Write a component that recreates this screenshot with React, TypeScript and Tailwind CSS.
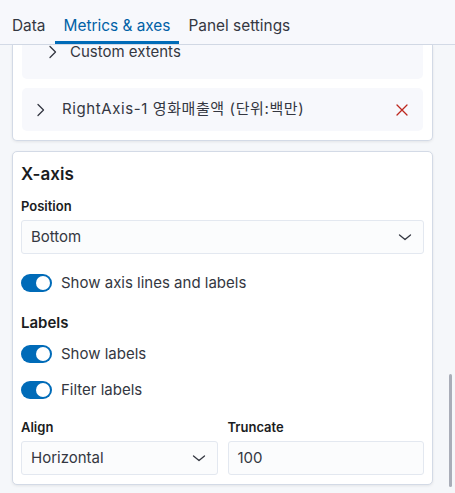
import React from 'react';

function Chevron({ dir = 'right', className = '' }: { dir?: 'right' | 'down'; className?: string }) {
    return (
        <svg width="16" height="16" viewBox="0 0 16 16" className={className} fill="none" stroke="currentColor" strokeWidth="1.3" strokeLinecap="round" strokeLinejoin="round">
            {dir === 'right' ? <path d="M5 2.5 L10.5 8 L5 13.5" /> : <path d="M2.5 6 L8 10.5 L13.5 6" />}
        </svg>
    );
}

function Toggle({ label }: { label: string }) {
    return (
        <div className="flex items-center gap-[9px] h-[18px]">
            <div className="w-[31px] h-[18px] rounded-full bg-[#006bb8] flex items-center justify-end pr-[2px]">
                <div className="w-[14px] h-[14px] rounded-full bg-white" />
            </div>
            <span className="text-[15px] text-[#343741]">{label}</span>
        </div>
    );
}

function Select({ value }: { value: string }) {
    return (
        <div className="h-[34px] flex items-center justify-between pl-[9px] pr-[10px] bg-[#fbfcfd] border border-[#e3e8f0] rounded-[3px] text-[15px] text-[#343741]">
            <span>{value}</span>
            <Chevron dir="down" className="text-[#343741]" />
        </div>
    );
}

export default function App() {
    return (
        <div className="w-[455px] h-[493px] bg-[#f5f7fa] relative overflow-hidden text-[#343741]" style={{ fontFamily: 'Inter, "Noto Sans CJK KR", sans-serif' }}>
            <div className="h-[45px] flex items-end px-[3px] border-b border-[#d3dae6] bg-[#f7f8fc]">
                <div className="h-[44px] px-[9px] flex items-center text-[15.4px] text-[#343741] border-b-[3px] border-transparent pt-[10px]">Data</div>
                <div className="h-[44px] px-[9px] flex items-center text-[15.4px] text-[#0061a6] border-b-[3px] border-[#006bb8] pt-[10px]">Metrics &amp; axes</div>
                <div className="h-[44px] px-[9px] flex items-center text-[15.4px] text-[#343741] border-b-[3px] border-transparent pt-[10px]">Panel settings</div>
            </div>

            <div className="pl-[12px] w-[433px]">
                <div className="bg-white border-x border-b border-[#d3dae6] rounded-b-[5px] shadow-[0_1px_3px_rgba(0,0,0,0.08)] px-[9px] pb-[9px]">
                    <div className="h-[34px] bg-[#f7f8fc] rounded-b-[5px] flex items-start pl-[23px] gap-[9px] text-[15px] text-[#343741]">
                        <Chevron className="mt-[-1px]" />
                        <span className="leading-[14px]">Custom extents</span>
                    </div>
                    <div className="mt-[9px] h-[43px] bg-[#f7f8fc] rounded-[5px] flex items-center pl-[11px] pr-[14px] text-[15px] text-[#343741]">
                        <Chevron />
                        <span className="ml-[13px] flex-1 tracking-[0.6px]">RightAxis-1 영화매출액 (단위:백만)</span>
                        <svg width="14" height="14" viewBox="0 0 14 14" stroke="#bd271e" strokeWidth="1.3" strokeLinecap="round">
                            <path d="M2 2 L12 12 M12 2 L2 12" />
                        </svg>
                    </div>
                </div>

                <div className="mt-[10px] bg-white border border-[#d3dae6] rounded-[5px] shadow-[0_1px_3px_rgba(0,0,0,0.08)] px-[8px] pt-[9px] pb-[9px]">
                    <div className="text-[17px] font-semibold text-[#1a1c21] h-[26px] leading-[26px]">X-axis</div>
                    <div className="mt-[12px] text-[13px] font-semibold text-[#1a1c21] h-[14px] leading-[14px]">Position</div>
                    <div className="mt-[7px]"><Select value="Bottom" /></div>
                    <div className="mt-[20px]"><Toggle label="Show axis lines and labels" /></div>
                    <div className="mt-[22px] text-[15px] font-semibold text-[#1a1c21] h-[18px] leading-[18px]">Labels</div>
                    <div className="mt-[13px]"><Toggle label="Show labels" /></div>
                    <div className="mt-[18px]"><Toggle label="Filter labels" /></div>
                    <div className="mt-[21px] grid grid-cols-2 gap-[10px]">
                        <div>
                            <div className="text-[13px] font-semibold text-[#1a1c21] h-[14px] leading-[14px]">Align</div>
                            <div className="mt-[7px]"><Select value="Horizontal" /></div>
                        </div>
                        <div>
                            <div className="text-[13px] font-semibold text-[#1a1c21] h-[14px] leading-[14px]">Truncate</div>
                            <div className="mt-[7px] h-[34px] flex items-center pl-[9px] bg-[#fbfcfd] border border-[#e3e8f0] rounded-[3px] text-[15px]">100</div>
                        </div>
                    </div>
                </div>
            </div>

            <div className="absolute right-[3px] top-[374px] w-[3px] h-[113px] bg-[#a9adb8] rounded-full" />
        </div>
    );
}
